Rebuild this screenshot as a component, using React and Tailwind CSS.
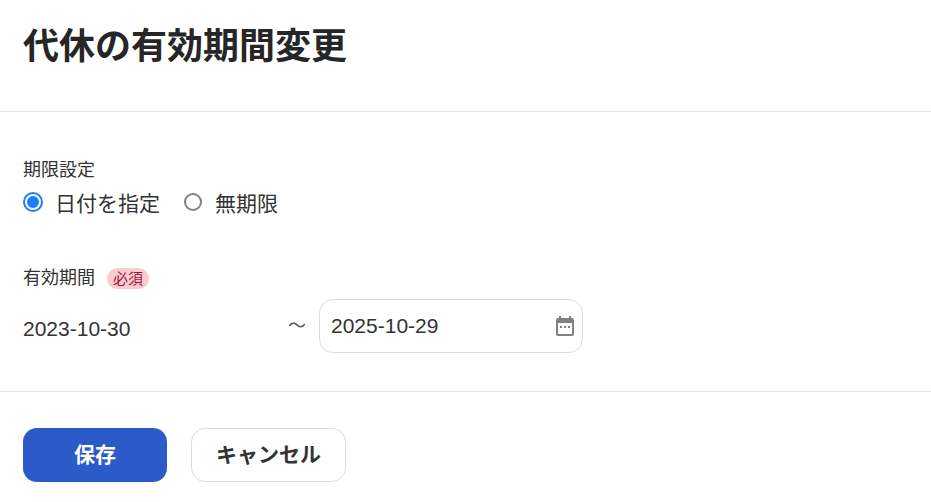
import React from 'react'

const font = { fontFamily: '"Liberation Sans", "Noto Sans CJK JP", sans-serif' }

const CalendarIcon = () => (
  <svg className="w-[18px] h-[20px] text-[#808080]" viewBox="0 0 18 20" fill="currentColor">
    <path d="M3 0h2v2h8V0h2v2h1a2 2 0 0 1 2 2v14a2 2 0 0 1-2 2H2a2 2 0 0 1-2-2V4a2 2 0 0 1 2-2h1V0zM2 7v11h14V7H2z" />
    <rect x="4" y="10" width="2" height="2" />
    <rect x="8" y="10" width="2" height="2" />
    <rect x="12" y="10" width="2" height="2" />
  </svg>
)

const App = () => {
  return (
    <div className="w-[931px] h-[502px] bg-white text-[#333333] overflow-hidden" style={font}>
      {/* Header */}
      <div className="h-[112px] border-b border-[#e5e5e5] px-[23px] pt-[23px]">
        <h1 className="text-[36px] leading-[48px] font-bold text-[#262626]">代休の有効期間変更</h1>
      </div>

      {/* Form */}
      <div className="h-[280px] border-b border-[#e5e5e5] px-[23px] pt-[45px]">
        <p className="text-[18px] leading-[26px]">期限設定</p>
        <div className="flex items-center h-[36px] mt-[1px]">
          <span className="w-[20px] h-[20px] rounded-full border-2 border-[#1a7cff] flex items-center justify-center">
            <span className="w-[12px] h-[12px] rounded-full bg-[#1a7cff]" />
          </span>
          <span className="ml-[12px] text-[21px] pt-[3px]">日付を指定</span>
          <span className="ml-[24px] w-[18px] h-[18px] rounded-full border-2 border-[#808080]" />
          <span className="ml-[13px] text-[21px] pt-[3px]">無期限</span>
        </div>

        <div className="flex items-center mt-[45px] h-[26px]">
          <span className="text-[18px] leading-[26px]">有効期間</span>
          <span className="ml-[12px] w-[42px] h-[21px] rounded-full bg-[#f9ccd3] text-[#a8123a] text-[15px] leading-[21px] text-center">必須</span>
        </div>
        <div className="flex items-center mt-[8px]">
          <span className="w-[265px] text-[21px] pt-[6px]">2023-10-30</span>
          <span className="w-[31px] text-[18px] leading-none text-[#555555]">〜</span>
          <div className="w-[264px] h-[54px] border border-[#dcdcdc] rounded-[14px] flex items-center justify-between pl-[11px] pr-[8px]">
            <span className="text-[21px]">2025-10-29</span>
            <CalendarIcon />
          </div>
        </div>
      </div>

      {/* Footer */}
      <div className="flex gap-[24px] px-[23px] pt-[36px]">
        <button className="w-[144px] h-[54px] rounded-[14px] bg-[#2a5bc8] text-white text-[21px] font-bold">保存</button>
        <button className="w-[155px] h-[54px] rounded-[14px] bg-white border border-[#dcdcdc] text-[21px] font-bold">キャンセル</button>
      </div>
    </div>
  )
}

export default App
